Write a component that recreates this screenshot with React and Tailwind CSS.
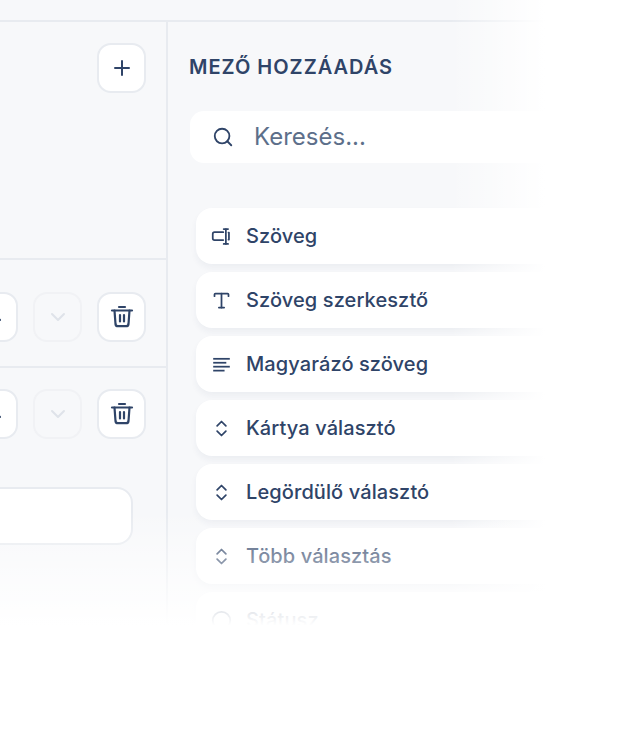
import React from 'react';
import { Plus, Search, ChevronUp, ChevronDown, Type, ChevronsUpDown, Circle } from 'lucide-react';

const InputIcon = (props) => (
  <svg width="21" height="21" viewBox="0 0 24 24" fill="none" stroke="currentColor" strokeWidth="2" strokeLinecap="round" strokeLinejoin="round" {...props}>
    <path d="M14 7H4a2 2 0 0 0-2 2v5a2 2 0 0 0 2 2h10" />
    <path d="M17 3.5v17" />
    <path d="M14.5 3.5h5" />
    <path d="M14.5 20.5h5" />
    <path d="M20 7.5h.5v8H20" />
  </svg>
);

const TextIcon = (props) => (
  <svg width="21" height="21" viewBox="0 0 24 24" fill="none" stroke="currentColor" strokeWidth="2" strokeLinecap="butt" {...props}>
    <path d="M2.5 5.5h19" />
    <path d="M2.5 10h15" />
    <path d="M2.5 14.5h19" />
    <path d="M2.5 19h13" />
  </svg>
);

const fields = [
  { label: "Szöveg", icon: InputIcon },
  { label: "Szöveg szerkesztő", icon: Type },
  { label: "Magyarázó szöveg", icon: TextIcon },
  { label: "Kártya választó", icon: ChevronsUpDown },
  { label: "Legördülő választó", icon: ChevronsUpDown },
  { label: "Több választás", icon: ChevronsUpDown },
  { label: "Státusz", icon: Circle },
];

const TrashIcon = () => (
  <svg width="24" height="24" viewBox="0 0 24 24" fill="none" stroke="currentColor" strokeWidth="2.2" strokeLinecap="round" strokeLinejoin="round">
    <path d="M2 5.5h20" />
    <path d="M9 2h6" />
    <path d="M4.5 5.5l1 13.5a2.5 2.5 0 0 0 2.5 2.2h8a2.5 2.5 0 0 0 2.5-2.2l1-13.5" />
    <path d="M10 10v6.5" />
    <path d="M14 10v6.5" />
  </svg>
);

const IconButton = ({ children, disabled }) => (
  <button className={`flex h-[50px] w-[49px] shrink-0 items-center justify-center rounded-[14px] border-2 ${disabled ? "border-[#f1f2f5] bg-[#f7f8fa] text-[#dfe3e9]" : "border-[#e8ebf0] bg-white text-[#2f4468]"}`}>
    {children}
  </button>
);

const ButtonRow = ({ className }) => (
  <div className={`flex items-start justify-end gap-[15px] pr-[20px] ${className}`}>
    <IconButton><ChevronUp size={24} /></IconButton>
    <IconButton disabled><ChevronDown size={24} /></IconButton>
    <IconButton><TrashIcon /></IconButton>
  </div>
);

export default function App() {
  return (
    <div className="relative flex h-[746px] w-[640px] flex-col overflow-hidden bg-[#f7f8fa] font-['Inter',sans-serif] text-[#2f4468]">
      <div className="h-[22px] shrink-0 border-b-2 border-[#e8ebf0]" />
      <div className="flex flex-1">
        <div className="w-[168px] shrink-0 overflow-hidden border-r-2 border-[#e8ebf0]">
          <div className="flex h-[238px] justify-end border-b-2 border-[#e8ebf0] pr-[20px] pt-[21px]">
            <IconButton><Plus size={24} /></IconButton>
          </div>
          <ButtonRow className="h-[108px] border-b-2 border-[#e8ebf0] pt-[32px]" />
          <ButtonRow className="h-[119px] pt-[21px]" />
          <div className="mr-[33px] ml-[-40px] h-[58px] rounded-[16px] border-2 border-[#e8ebf0] bg-white" />
        </div>
        <div className="flex-1 pl-[21px]">
          <div className="pt-[31px] text-[20px] font-semibold uppercase leading-[28px] tracking-[0.05em] whitespace-nowrap">Mező hozzáadás</div>
          <div className="mt-[30px] ml-[1px] flex h-[52px] items-center gap-[20px] rounded-l-[14px] bg-white pl-[22px] text-[24px] text-[#5d6f8a]">
            <Search size={22} className="shrink-0 text-[#2f4468]" />
            <span>Keresés...</span>
          </div>
          <div className="mt-[45px] ml-[7px] flex flex-col gap-[8px]">
            {fields.map((f) => {
              const Icon = f.icon;
              return (
                <div key={f.label} className="flex h-[56px] items-center gap-[14px] rounded-l-[16px] bg-white pl-[15px] text-[20px] font-medium tracking-[0.005em] shadow-[0_4px_6px_rgba(47,68,104,0.05)]">
                  <Icon size={21} strokeWidth={2} className="shrink-0" />
                  <span className="whitespace-nowrap">{f.label}</span>
                </div>
              );
            })}
          </div>
        </div>
      </div>
      <div className="absolute inset-y-0 right-0 w-[190px] bg-gradient-to-r from-transparent to-white to-[50%]" />
      <div className="absolute inset-x-0 bottom-0 h-[236px] bg-gradient-to-b from-transparent to-white to-[49%]" />
    </div>
  );
}
